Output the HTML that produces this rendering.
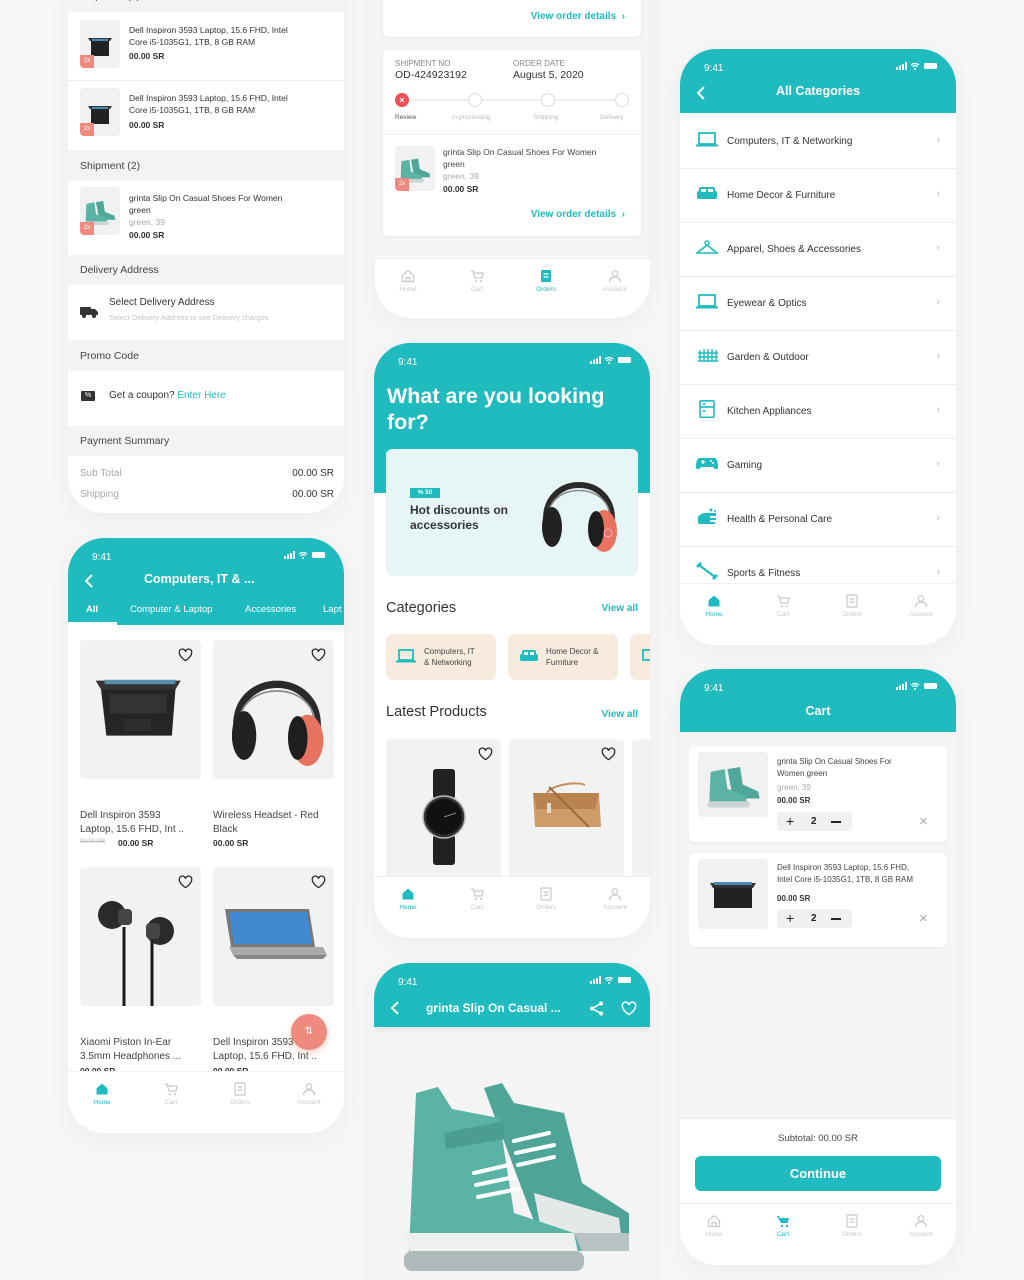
<!DOCTYPE html>
<html style="width:1024px;height:1280px;overflow:hidden"><head><meta charset="utf-8">
<style>
*{margin:0;padding:0;box-sizing:border-box}
body{width:1024px;height:1280px;background:#f6f6f6;font-family:"Liberation Sans",sans-serif;position:relative;overflow:hidden;color:#333}
.ph{position:absolute;background:#fff;border-radius:36px;overflow:hidden;box-shadow:0 6px 24px rgba(0,0,0,.04)}
.a{position:absolute}
.t{position:absolute;white-space:nowrap}
.teal{background:#1fbbbf}
.sb{position:absolute;top:14px;left:24px;color:#fff;font-size:10px}
.sbr{position:absolute;top:12px;right:16px}
.nav{position:absolute;left:0;right:0;bottom:0;height:62px;background:#fff;border-top:1px solid #f0f0f0}
.ni{position:absolute;top:10px;width:40px;margin-left:-20px;text-align:center;font-size:6.5px;color:#c8c8c8}
.ni svg{display:block;margin:0 auto 3px}
.on{color:#1fbbbf}
.thumb{position:absolute;background:#f1f1f1;border-radius:4px;overflow:hidden}
.badge{position:absolute;left:0;bottom:0;width:14px;height:13px;background:#ee8b7e;color:#fff;font-size:6px;line-height:13px;text-align:center}
.gh{position:absolute;left:12px;font-size:10.5px;color:#444}
.w{position:absolute;left:0;right:0;background:#fff}
.cat{position:absolute;left:0;right:0;height:54px;border-bottom:1px solid #ececec;background:#fff}
.cat .t{left:47px;top:21px;font-size:10px;color:#333}
.cat .ic{position:absolute;left:16px;top:17px}
.cat .ch{position:absolute;right:16px;top:19px;color:#bbb;font-size:11px}
.pc{position:absolute;background:#f2f2f2;border-radius:4px;overflow:hidden}
.heart{position:absolute;right:8px;top:8px}
</style></head><body>

<!-- ============ PHONE A (checkout) ============ -->
<div class="ph" style="left:68px;top:-40px;width:276px;height:553px;background:#f3f3f3">
 <div class="gh" style="top:30px">Shipment (1)</div>
 <div class="w" style="top:52px;height:138px"></div>
 <div class="a" style="left:0;right:0;top:120px;height:1px;background:#ececec"></div>
 <div class="thumb" style="left:12px;top:60px;width:40px;height:48px"><svg width="40" height="48" viewBox="0 0 40 48"><path d="M8 18h24l-2 3H10z" fill="#333"/><rect x="11" y="20" width="18" height="16" fill="#222"/><rect x="12" y="19" width="16" height="2" fill="#4a8bb5"/></svg><div class="badge">2x</div></div>
 <div class="t" style="left:61px;top:64px;font-size:8.5px;line-height:12px;color:#333">Dell Inspiron 3593 Laptop, 15.6 FHD, Intel<br>Core i5-1035G1, 1TB, 8 GB RAM</div>
 <div class="t" style="left:61px;top:91px;font-size:8.5px;font-weight:bold">00.00 SR</div>
 <div class="thumb" style="left:12px;top:128px;width:40px;height:48px"><svg width="40" height="48" viewBox="0 0 40 48"><path d="M8 18h24l-2 3H10z" fill="#333"/><rect x="11" y="20" width="18" height="16" fill="#222"/><rect x="12" y="19" width="16" height="2" fill="#4a8bb5"/></svg><div class="badge">2x</div></div>
 <div class="t" style="left:61px;top:132px;font-size:8.5px;line-height:12px;color:#333">Dell Inspiron 3593 Laptop, 15.6 FHD, Intel<br>Core i5-1035G1, 1TB, 8 GB RAM</div>
 <div class="t" style="left:61px;top:160px;font-size:8.5px;font-weight:bold">00.00 SR</div>
 <div class="gh" style="top:200px">Shipment (2)</div>
 <div class="w" style="top:221px;height:74px"></div>
 <div class="thumb" style="left:12px;top:227px;width:40px;height:48px"><svg width="40" height="48" viewBox="0 0 100 80"><path d="M40 18L58 15L62 42L86 52L88 62L48 62Z" fill="#4fa79a"/><path d="M16 22L36 18L40 48L66 58L68 70L14 70Z" fill="#5bb3a5"/><rect x="12" y="66" width="60" height="9" rx="4" fill="#cdd4d4"/></svg><div class="badge">2x</div></div>
 <div class="t" style="left:61px;top:232px;font-size:8.5px;line-height:12px;color:#333">grinta Slip On Casual Shoes For Women<br>green</div>
 <div class="t" style="left:61px;top:257px;font-size:8.5px;color:#aaa">green, 39</div>
 <div class="t" style="left:61px;top:270px;font-size:8.5px;font-weight:bold">00.00 SR</div>
 <div class="gh" style="top:304px">Delivery Address</div>
 <div class="w" style="top:325px;height:55px"></div>
 <svg class="a" style="left:12px;top:346px" width="18" height="12" viewBox="0 0 18 12"><rect x="0" y="1" width="11" height="8" rx="1" fill="#333"/><path d="M11 3h4l3 3v3h-7z" fill="#333"/><circle cx="4" cy="10" r="2" fill="#333"/><circle cx="14" cy="10" r="2" fill="#333"/></svg>
 <div class="t" style="left:41px;top:337px;font-size:10px;color:#333">Select Delivery Address</div>
 <div class="t" style="left:41px;top:353px;font-size:7.5px;color:#c4c4c4">Select Delivery Address to see Delivery charges</div>
 <div class="gh" style="top:390px">Promo Code</div>
 <div class="w" style="top:411px;height:55px"></div>
 <div class="a" style="left:13px;top:431px;width:14px;height:10px;background:#333;border-radius:1px;color:#fff;font-size:7px;text-align:center;line-height:10px">%</div>
 <div class="t" style="left:41px;top:430px;font-size:10px;color:#333">Get a coupon? <span style="color:#1fbbbf">Enter Here</span></div>
 <div class="gh" style="top:475px">Payment Summary</div>
 <div class="w" style="top:496px;height:60px"></div>
 <div class="t" style="left:12px;top:508px;font-size:10px;color:#aaa">Sub Total</div>
 <div class="t" style="right:10px;top:508px;font-size:10px;color:#333">00.00 SR</div>
 <div class="t" style="left:12px;top:529px;font-size:10px;color:#aaa">Shipping</div>
 <div class="t" style="right:10px;top:529px;font-size:10px;color:#333">00.00 SR</div>
</div>

<!-- ============ PHONE B (orders) ============ -->
<div class="ph" style="left:375px;top:-40px;width:275px;height:358px;background:#f5f5f5">
 <div class="a" style="left:8px;top:20px;width:258px;height:57px;background:#fff;border-radius:6px;box-shadow:0 1px 3px rgba(0,0,0,.06)"></div>
 <div class="t" style="right:25px;top:51px;font-size:10px;font-weight:bold;color:#1fbbbf">View order details &nbsp;›</div>
 <div class="a" style="left:8px;top:90px;width:258px;height:186px;background:#fff;border-radius:6px;box-shadow:0 1px 3px rgba(0,0,0,.06)"></div>
 <div class="t" style="left:20px;top:99px;font-size:8px;color:#888">SHIPMENT NO</div>
 <div class="t" style="left:20px;top:109px;font-size:10.5px;color:#333">OD-424923192</div>
 <div class="t" style="left:138px;top:99px;font-size:8px;color:#888">ORDER DATE</div>
 <div class="t" style="left:138px;top:109px;font-size:10.5px;color:#333">August 5, 2020</div>
 <div class="a" style="left:27px;top:139px;width:220px;height:2px;background:#eee"></div>
 <div class="a" style="left:20px;top:133px;width:14px;height:14px;border-radius:50%;background:#ef4f55;color:#fff;font-size:9px;line-height:14px;text-align:center;font-weight:bold">×</div>
 <div class="a" style="left:93px;top:133px;width:14px;height:14px;border-radius:50%;background:#fff;border:1.5px solid #ddd"></div>
 <div class="a" style="left:166px;top:133px;width:14px;height:14px;border-radius:50%;background:#fff;border:1.5px solid #ddd"></div>
 <div class="a" style="left:240px;top:133px;width:14px;height:14px;border-radius:50%;background:#fff;border:1.5px solid #ddd"></div>
 <div class="t" style="left:20px;top:154px;font-size:6.5px;color:#555">Review</div>
 <div class="t" style="left:77px;top:154px;font-size:6.5px;color:#bbb">in processing</div>
 <div class="t" style="left:158px;top:154px;font-size:6.5px;color:#bbb">Shipping</div>
 <div class="t" style="left:225px;top:154px;font-size:6.5px;color:#bbb">Delivery</div>
 <div class="a" style="left:8px;top:174px;width:258px;height:1px;background:#eee"></div>
 <div class="thumb" style="left:20px;top:186px;width:40px;height:45px"><svg width="40" height="45" viewBox="0 0 100 80"><path d="M40 18L58 15L62 42L86 52L88 62L48 62Z" fill="#4fa79a"/><path d="M16 22L36 18L40 48L66 58L68 70L14 70Z" fill="#5bb3a5"/><rect x="12" y="66" width="60" height="9" rx="4" fill="#cdd4d4"/></svg><div class="badge">2x</div></div>
 <div class="t" style="left:68px;top:186px;font-size:8.5px;line-height:12px;color:#444">grinta Slip On Casual Shoes For Women<br>green</div>
 <div class="t" style="left:68px;top:211px;font-size:8.5px;color:#aaa">green, 39</div>
 <div class="t" style="left:68px;top:224px;font-size:8.5px;font-weight:bold">00.00 SR</div>
 <div class="t" style="right:25px;top:249px;font-size:10px;font-weight:bold;color:#1fbbbf">View order details &nbsp;›</div>
 <div class="nav" style="height:60px">
  <div class="ni" style="left:33px"><svg width="14" height="14" viewBox="0 0 14 14"><path d="M1.5 6.5L7 1.5l5.5 5v6h-11z M5 12.5v-4h4v4" fill="none" stroke="#c8c8c8" stroke-width="1.2"/></svg>Home</div>
  <div class="ni" style="left:102px"><svg width="14" height="14" viewBox="0 0 14 14"><path d="M1 2h2l2 7h7l1-5H4" fill="none" stroke="#c8c8c8" stroke-width="1.2"/><circle cx="6" cy="12" r="1" fill="#c8c8c8"/><circle cx="11" cy="12" r="1" fill="#c8c8c8"/></svg>Cart</div>
  <div class="ni on" style="left:171px"><svg width="14" height="14" viewBox="0 0 14 14"><rect x="2" y="1" width="10" height="12" rx="1" fill="#1fbbbf"/><path d="M4.5 5h5M4.5 8h5" stroke="#fff" stroke-width="1.2"/></svg>Orders</div>
  <div class="ni" style="left:240px"><svg width="14" height="14" viewBox="0 0 14 14"><circle cx="7" cy="4.5" r="2.8" fill="none" stroke="#c8c8c8" stroke-width="1.2"/><path d="M1.5 13c0-3 2.5-5 5.5-5s5.5 2 5.5 5" fill="none" stroke="#c8c8c8" stroke-width="1.2"/></svg>Account</div>
 </div>
</div>

<!-- ============ PHONE C (home) ============ -->
<div class="ph" style="left:374px;top:343px;width:276px;height:595px">
 <div class="a teal" style="left:0;top:0;width:276px;height:150px"></div>
 <div class="sb">9:41</div>
 <svg class="sbr" width="44" height="10" viewBox="0 0 44 10"><rect x="0" y="6" width="2" height="3" fill="#fff"/><rect x="3" y="4.5" width="2" height="4.5" fill="#fff"/><rect x="6" y="3" width="2" height="6" fill="#fff"/><rect x="9" y="1" width="2" height="8" fill="#fff"/><path d="M15 4a6 6 0 0 1 8 0M16.5 5.8a3.5 3.5 0 0 1 5 0" stroke="#fff" stroke-width="1.2" fill="none"/><circle cx="19" cy="8" r="1" fill="#fff"/><rect x="28" y="2" width="13" height="6" rx="1.5" fill="#fff"/></svg>
 <div class="t" style="left:13px;top:40px;font-size:21.5px;line-height:26px;font-weight:bold;color:#fff;white-space:normal;width:250px">What are you looking for?</div>
 <div class="a" style="left:12px;top:106px;width:252px;height:127px;background:#e6f6f6;border-radius:6px"></div>
 <div class="a" style="left:36px;top:145px;width:30px;height:10px;background:#1fbbbf;color:#fff;font-size:6.5px;text-align:center;line-height:10px;font-weight:bold">% 50</div>
 <div class="t" style="left:36px;top:160px;font-size:12px;line-height:15px;font-weight:bold;color:#333">Hot discounts on<br>accessories</div>
 <svg class="a" style="left:164px;top:118px" width="82" height="100" viewBox="0 0 82 100"><path d="M8 60C6 12 76 12 74 60" fill="none" stroke="#2a2a2a" stroke-width="6"/><path d="M10 58C9 20 73 20 72 58" fill="none" stroke="#888" stroke-width="1.5"/><ellipse cx="14" cy="66" rx="10" ry="20" fill="#222"/><ellipse cx="66" cy="70" rx="13" ry="21" fill="#e8735f"/><ellipse cx="58" cy="68" rx="8" ry="18" fill="#1e1e1e"/><circle cx="70" cy="72" r="4" fill="none" stroke="#fbd" stroke-width="0.8"/></svg>
 <div class="t" style="left:12px;top:257px;font-size:14.5px;color:#333">Categories</div>
 <div class="t" style="right:12px;top:260px;font-size:10px;font-weight:bold;color:#1fbbbf">View all</div>
 <div class="a" style="left:12px;top:291px;width:110px;height:46px;background:#f7ebde;border-radius:7px"></div>
 <svg class="a" style="left:22px;top:306px" width="20" height="14" viewBox="0 0 20 14"><rect x="3" y="1" width="14" height="10" fill="none" stroke="#1fbbbf" stroke-width="1.8"/><rect x="0" y="11.5" width="20" height="2" fill="#1fbbbf"/></svg>
 <div class="t" style="left:50px;top:303px;font-size:8px;line-height:11px;color:#444">Computers, IT<br>&amp; Networking</div>
 <div class="a" style="left:134px;top:291px;width:110px;height:46px;background:#f7ebde;border-radius:7px"></div>
 <svg class="a" style="left:145px;top:306px" width="20" height="14" viewBox="0 0 20 14"><rect x="1" y="5" width="18" height="7" rx="2" fill="#1fbbbf"/><rect x="3" y="1" width="14" height="6" rx="2" fill="#1fbbbf"/><rect x="5" y="3" width="4" height="3" fill="#fff"/><rect x="11" y="3" width="4" height="3" fill="#fff"/></svg>
 <div class="t" style="left:172px;top:303px;font-size:8px;line-height:11px;color:#444">Home Decor &amp;<br>Furniture</div>
 <div class="a" style="left:256px;top:291px;width:40px;height:46px;background:#f7ebde;border-radius:7px"></div>
 <svg class="a" style="left:266px;top:306px" width="20" height="14" viewBox="0 0 20 14"><rect x="3" y="1" width="14" height="10" fill="none" stroke="#1fbbbf" stroke-width="1.8"/></svg>
 <div class="t" style="left:12px;top:361px;font-size:14.5px;color:#333">Latest Products</div>
 <div class="t" style="right:12px;top:366px;font-size:10px;font-weight:bold;color:#1fbbbf">View all</div>
 <div class="pc" style="left:12px;top:396px;width:115px;height:140px">
  <svg class="heart" width="15" height="14" viewBox="0 0 24 22"><path d="M12 20S2 14 2 7a5 5 0 0 1 10-1 5 5 0 0 1 10 1c0 7-10 13-10 13z" fill="none" stroke="#222" stroke-width="2"/></svg>
  <svg class="a" style="left:35px;top:30px" width="46" height="96" viewBox="0 0 46 96"><rect x="12" y="0" width="22" height="30" rx="3" fill="#222"/><rect x="12" y="66" width="22" height="30" rx="3" fill="#222"/><circle cx="23" cy="48" r="21" fill="#333" stroke="#bbb" stroke-width="1.5"/><circle cx="23" cy="48" r="18" fill="#111"/><path d="M23 48L35 44" stroke="#888" stroke-width="1"/></svg>
 </div>
 <div class="pc" style="left:135px;top:396px;width:115px;height:140px">
  <svg class="heart" width="15" height="14" viewBox="0 0 24 22"><path d="M12 20S2 14 2 7a5 5 0 0 1 10-1 5 5 0 0 1 10 1c0 7-10 13-10 13z" fill="none" stroke="#222" stroke-width="2"/></svg>
  <svg class="a" style="left:18px;top:36px" width="80" height="60" viewBox="0 0 80 60"><path d="M20 18c4-8 30-12 38-8" fill="none" stroke="#c58f58" stroke-width="2"/><path d="M6 18h66l2 34H8z" fill="#cf9b68"/><path d="M6 18h66l-4 16H10z" fill="#b9834f"/><path d="M22 12l40 40" stroke="#a06c3e" stroke-width="2"/><rect x="20" y="28" width="4" height="10" fill="#ddd"/></svg>
 </div>
 <div class="pc" style="left:258px;top:396px;width:40px;height:140px"></div>
 <div class="nav">
  <div class="ni on" style="left:34px"><svg width="14" height="14" viewBox="0 0 14 14"><path d="M1.5 6.5L7 1.5l5.5 5v6h-11z" fill="#1fbbbf"/></svg>Home</div>
  <div class="ni" style="left:103px"><svg width="14" height="14" viewBox="0 0 14 14"><path d="M1 2h2l2 7h7l1-5H4" fill="none" stroke="#c8c8c8" stroke-width="1.2"/><circle cx="6" cy="12" r="1" fill="#c8c8c8"/><circle cx="11" cy="12" r="1" fill="#c8c8c8"/></svg>Cart</div>
  <div class="ni" style="left:172px"><svg width="14" height="14" viewBox="0 0 14 14"><rect x="2" y="1" width="10" height="12" rx="1" fill="none" stroke="#c8c8c8" stroke-width="1.2"/><path d="M4.5 5h5M4.5 8h5" stroke="#c8c8c8" stroke-width="1.2"/></svg>Orders</div>
  <div class="ni" style="left:241px"><svg width="14" height="14" viewBox="0 0 14 14"><circle cx="7" cy="4.5" r="2.8" fill="none" stroke="#c8c8c8" stroke-width="1.2"/><path d="M1.5 13c0-3 2.5-5 5.5-5s5.5 2 5.5 5" fill="none" stroke="#c8c8c8" stroke-width="1.2"/></svg>Account</div>
 </div>
</div>

<!-- ============ PHONE D (product detail) ============ -->
<div class="ph" style="left:374px;top:963px;width:276px;height:317px;border-radius:36px 36px 0 0;background:#f4f4f4">
 <div class="a teal" style="left:0;top:0;width:276px;height:64px;box-shadow:0 2px 6px rgba(0,0,0,.08)"></div>
 <div class="sb">9:41</div>
 <svg class="sbr" width="44" height="10" viewBox="0 0 44 10"><rect x="0" y="6" width="2" height="3" fill="#fff"/><rect x="3" y="4.5" width="2" height="4.5" fill="#fff"/><rect x="6" y="3" width="2" height="6" fill="#fff"/><rect x="9" y="1" width="2" height="8" fill="#fff"/><path d="M15 4a6 6 0 0 1 8 0M16.5 5.8a3.5 3.5 0 0 1 5 0" stroke="#fff" stroke-width="1.2" fill="none"/><circle cx="19" cy="8" r="1" fill="#fff"/><rect x="28" y="2" width="13" height="6" rx="1.5" fill="#fff"/></svg>
 <svg class="a" style="left:17px;top:38px" width="8" height="14" viewBox="0 0 8 14"><path d="M7 1L1 7l6 6" fill="none" stroke="#fff" stroke-width="2"/></svg>
 <div class="t" style="left:52px;top:38px;font-size:12px;font-weight:bold;color:#fff">grinta Slip On Casual ...</div>
 <svg class="a" style="left:215px;top:38px" width="15" height="15" viewBox="0 0 15 15"><circle cx="12" cy="2.5" r="2" fill="#fff"/><circle cx="3" cy="7.5" r="2" fill="#fff"/><circle cx="12" cy="12.5" r="2" fill="#fff"/><path d="M12 2.5L3 7.5l9 5" stroke="#fff" stroke-width="1.5" fill="none"/></svg>
 <svg class="a" style="left:247px;top:38px" width="16" height="15" viewBox="0 0 24 22"><path d="M12 20S2 14 2 7a5 5 0 0 1 10-1 5 5 0 0 1 10 1c0 7-10 13-10 13z" fill="none" stroke="#fff" stroke-width="2.2"/></svg>
 <svg class="a" style="left:30px;top:110px" width="225" height="200" viewBox="0 0 225 200"><path d="M80 15L98 10L110 30L160 40L178 110L240 150L240 175L140 175Z" fill="#4ea597"/><path d="M130 120L215 145L218 170L140 172Z" fill="#e4e8e8"/><rect x="120" y="160" width="110" height="18" rx="8" fill="#b8c2c2"/><path d="M12 20L34 14L48 36L95 45L110 140L170 160L178 178L5 178Z" fill="#5bb3a5"/><path d="M0 160L170 160L175 185L10 190Z" fill="#eef0f0"/><rect x="0" y="178" width="180" height="20" rx="8" fill="#aeb9b9"/><path d="M70 100l35-8M72 112l38-8M74 124l40-8M110 68l35-8M112 80l38-8M114 92l36-8" stroke="#fff" stroke-width="4" stroke-linecap="round"/><path d="M40 60l60-12v18l-58 10z" fill="#4a9e91"/></svg>
</div>

<!-- ============ PHONE E (categories) ============ -->
<div class="ph" style="left:680px;top:49px;width:276px;height:596px">
 <div class="a teal" style="left:0;top:0;width:276px;height:64px"></div>
 <div class="sb">9:41</div>
 <svg class="sbr" width="44" height="10" viewBox="0 0 44 10"><rect x="0" y="6" width="2" height="3" fill="#fff"/><rect x="3" y="4.5" width="2" height="4.5" fill="#fff"/><rect x="6" y="3" width="2" height="6" fill="#fff"/><rect x="9" y="1" width="2" height="8" fill="#fff"/><path d="M15 4a6 6 0 0 1 8 0M16.5 5.8a3.5 3.5 0 0 1 5 0" stroke="#fff" stroke-width="1.2" fill="none"/><circle cx="19" cy="8" r="1" fill="#fff"/><rect x="28" y="2" width="13" height="6" rx="1.5" fill="#fff"/></svg>
 <svg class="a" style="left:17px;top:37px" width="8" height="14" viewBox="0 0 8 14"><path d="M7 1L1 7l6 6" fill="none" stroke="#fff" stroke-width="2"/></svg>
 <div class="t" style="left:0;width:276px;text-align:center;top:35px;font-size:12.5px;font-weight:bold;color:#fff">All Categories</div>
 <div class="cat" style="top:66px"><svg class="ic" width="22" height="15" viewBox="0 0 22 15"><rect x="3" y="1" width="16" height="11" fill="none" stroke="#1fbbbf" stroke-width="1.8"/><rect x="0" y="12.5" width="22" height="2" fill="#1fbbbf"/></svg><div class="t">Computers, IT &amp; Networking</div><div class="ch">›</div></div>
 <div class="cat" style="top:120px"><svg class="ic" width="22" height="15" viewBox="0 0 22 15"><rect x="1" y="5" width="20" height="8" rx="2" fill="#1fbbbf"/><rect x="3" y="1" width="16" height="7" rx="2" fill="#1fbbbf"/><rect x="5" y="3" width="5" height="3" fill="#fff"/><rect x="12" y="3" width="5" height="3" fill="#fff"/></svg><div class="t">Home Decor &amp; Furniture</div><div class="ch">›</div></div>
 <div class="cat" style="top:174px"><svg class="ic" width="22" height="15" viewBox="0 0 22 15"><circle cx="11" cy="3" r="2" fill="none" stroke="#1fbbbf" stroke-width="1.5"/><path d="M11 5L1 13h20z" fill="none" stroke="#1fbbbf" stroke-width="1.6"/></svg><div class="t">Apparel, Shoes &amp; Accessories</div><div class="ch">›</div></div>
 <div class="cat" style="top:228px"><svg class="ic" width="22" height="15" viewBox="0 0 22 15"><rect x="3" y="1" width="16" height="11" fill="none" stroke="#1fbbbf" stroke-width="1.8"/><rect x="0" y="12.5" width="22" height="2" fill="#1fbbbf"/></svg><div class="t">Eyewear &amp; Optics</div><div class="ch">›</div></div>
 <div class="cat" style="top:282px"><svg class="ic" width="22" height="15" viewBox="0 0 22 15"><path d="M4 2v12M8 1v13M12 1v13M16 1v13M20 2v12M2 5h20M2 9h20M2 13h20" stroke="#1fbbbf" stroke-width="1.4"/></svg><div class="t">Garden &amp; Outdoor</div><div class="ch">›</div></div>
 <div class="cat" style="top:336px"><svg class="ic" width="22" height="18" viewBox="0 0 22 18" style="top:15px"><rect x="4" y="0.8" width="14" height="16.5" rx="1" fill="none" stroke="#1fbbbf" stroke-width="1.6"/><path d="M4 7h14" stroke="#1fbbbf" stroke-width="1.6"/><rect x="7" y="3" width="2" height="2" fill="#1fbbbf"/><rect x="7" y="10" width="2" height="2" fill="#1fbbbf"/></svg><div class="t">Kitchen Appliances</div><div class="ch">›</div></div>
 <div class="cat" style="top:390px"><svg class="ic" width="22" height="15" viewBox="0 0 22 15"><path d="M4 2h14c3 0 4 4 4 9 0 3-3 3-5 0H5c-2 3-5 3-5 0 0-5 1-9 4-9z" fill="#1fbbbf"/><path d="M5 6h4M7 4v4" stroke="#fff" stroke-width="1.3"/><circle cx="15" cy="5" r="1" fill="#fff"/><circle cx="17" cy="7" r="1" fill="#fff"/></svg><div class="t">Gaming</div><div class="ch">›</div></div>
 <div class="cat" style="top:444px"><svg class="ic" width="22" height="18" viewBox="0 0 22 18" style="top:15px"><path d="M2 9c2-3 5-4 8-4h10v3h-6v2h6v2h-6v2h5v2H4c-2 0-2-2-2-2z" fill="#1fbbbf"/><circle cx="15" cy="2" r="1.5" fill="#1fbbbf"/><circle cx="19" cy="3" r="1" fill="#1fbbbf"/></svg><div class="t">Health &amp; Personal Care</div><div class="ch">›</div></div>
 <div class="cat" style="top:498px"><svg class="ic" width="22" height="18" viewBox="0 0 22 18" style="top:15px"><path d="M3 3l16 12" stroke="#1fbbbf" stroke-width="2.2"/><path d="M1 5l4-4M17 17l4-4" stroke="#1fbbbf" stroke-width="2.8"/></svg><div class="t">Sports &amp; Fitness</div><div class="ch">›</div></div>
 <div class="nav">
  <div class="ni on" style="left:34px"><svg width="14" height="14" viewBox="0 0 14 14"><path d="M1.5 6.5L7 1.5l5.5 5v6h-11z" fill="#1fbbbf"/></svg>Home</div>
  <div class="ni" style="left:103px"><svg width="14" height="14" viewBox="0 0 14 14"><path d="M1 2h2l2 7h7l1-5H4" fill="none" stroke="#c8c8c8" stroke-width="1.2"/><circle cx="6" cy="12" r="1" fill="#c8c8c8"/><circle cx="11" cy="12" r="1" fill="#c8c8c8"/></svg>Cart</div>
  <div class="ni" style="left:172px"><svg width="14" height="14" viewBox="0 0 14 14"><rect x="2" y="1" width="10" height="12" rx="1" fill="none" stroke="#c8c8c8" stroke-width="1.2"/><path d="M4.5 5h5M4.5 8h5" stroke="#c8c8c8" stroke-width="1.2"/></svg>Orders</div>
  <div class="ni" style="left:241px"><svg width="14" height="14" viewBox="0 0 14 14"><circle cx="7" cy="4.5" r="2.8" fill="none" stroke="#c8c8c8" stroke-width="1.2"/><path d="M1.5 13c0-3 2.5-5 5.5-5s5.5 2 5.5 5" fill="none" stroke="#c8c8c8" stroke-width="1.2"/></svg>Account</div>
 </div>
</div>

<!-- ============ PHONE F (product list) ============ -->
<div class="ph" style="left:68px;top:538px;width:276px;height:595px">
 <div class="a teal" style="left:0;top:0;width:276px;height:87px"></div>
 <div class="sb">9:41</div>
 <svg class="sbr" width="44" height="10" viewBox="0 0 44 10"><rect x="0" y="6" width="2" height="3" fill="#fff"/><rect x="3" y="4.5" width="2" height="4.5" fill="#fff"/><rect x="6" y="3" width="2" height="6" fill="#fff"/><rect x="9" y="1" width="2" height="8" fill="#fff"/><path d="M15 4a6 6 0 0 1 8 0M16.5 5.8a3.5 3.5 0 0 1 5 0" stroke="#fff" stroke-width="1.2" fill="none"/><circle cx="19" cy="8" r="1" fill="#fff"/><rect x="28" y="2" width="13" height="6" rx="1.5" fill="#fff"/></svg>
 <svg class="a" style="left:17px;top:36px" width="8" height="14" viewBox="0 0 8 14"><path d="M7 1L1 7l6 6" fill="none" stroke="#fff" stroke-width="2"/></svg>
 <div class="t" style="left:76px;top:34px;font-size:12.5px;font-weight:bold;color:#fff">Computers, IT &amp; ...</div>
 <div class="t" style="left:18px;top:66px;font-size:9.5px;font-weight:bold;color:#fff">All</div>
 <div class="t" style="left:62px;top:66px;font-size:9.5px;color:#fff">Computer &amp; Laptop</div>
 <div class="t" style="left:177px;top:66px;font-size:9.5px;color:#fff">Accessories</div>
 <div class="t" style="left:255px;top:66px;font-size:9.5px;color:#fff">Lapt</div>
 <div class="a" style="left:0;top:84px;width:49px;height:3px;background:#fff"></div>
 <div class="pc" style="left:12px;top:102px;width:121px;height:139px">
  <svg class="heart" width="15" height="14" viewBox="0 0 24 22"><path d="M12 20S2 14 2 7a5 5 0 0 1 10-1 5 5 0 0 1 10 1c0 7-10 13-10 13z" fill="none" stroke="#222" stroke-width="2"/></svg>
  <svg class="a" style="left:12px;top:38px" width="96" height="62" viewBox="0 0 100 70"><path d="M0 3h96l-6 10H6z" fill="#333"/><rect x="10" y="2" width="80" height="5" fill="#5a8fb0"/><path d="M6 13h84l-4 52H12z" fill="#252525"/><rect x="16" y="18" width="64" height="22" fill="#333"/><rect x="32" y="46" width="30" height="14" fill="#2e2e2e"/></svg>
 </div>
 <div class="pc" style="left:145px;top:102px;width:121px;height:139px">
  <svg class="heart" width="15" height="14" viewBox="0 0 24 22"><path d="M12 20S2 14 2 7a5 5 0 0 1 10-1 5 5 0 0 1 10 1c0 7-10 13-10 13z" fill="none" stroke="#222" stroke-width="2"/></svg>
  <svg class="a" style="left:14px;top:14px" width="100" height="124" viewBox="0 0 82 100"><path d="M8 60C6 12 76 12 74 60" fill="none" stroke="#2a2a2a" stroke-width="6"/><path d="M10 58C9 20 73 20 72 58" fill="none" stroke="#888" stroke-width="1.5"/><ellipse cx="14" cy="66" rx="10" ry="20" fill="#222"/><ellipse cx="66" cy="70" rx="13" ry="21" fill="#e8735f"/><ellipse cx="58" cy="68" rx="8" ry="18" fill="#1e1e1e"/></svg>
 </div>
 <div class="t" style="left:12px;top:271px;font-size:10px;line-height:14px;color:#444">Dell Inspiron 3593<br>Laptop, 15.6 FHD, Int ..</div>
 <div class="t" style="left:12px;top:301px;font-size:6px;color:#bbb;text-decoration:line-through">00.00 SR</div>
 <div class="t" style="left:50px;top:300px;font-size:8.5px;font-weight:bold">00.00 SR</div>
 <div class="t" style="left:145px;top:271px;font-size:10px;line-height:14px;color:#444">Wireless Headset - Red<br>Black</div>
 <div class="t" style="left:145px;top:300px;font-size:8.5px;font-weight:bold">00.00 SR</div>
 <div class="pc" style="left:12px;top:329px;width:121px;height:139px">
  <svg class="heart" width="15" height="14" viewBox="0 0 24 22"><path d="M12 20S2 14 2 7a5 5 0 0 1 10-1 5 5 0 0 1 10 1c0 7-10 13-10 13z" fill="none" stroke="#222" stroke-width="2"/></svg>
  <svg class="a" style="left:8px;top:30px" width="105" height="109" viewBox="0 0 105 109"><circle cx="24" cy="18" r="14" fill="#2a2a2a"/><rect x="30" y="12" width="14" height="16" rx="4" fill="#444"/><circle cx="72" cy="34" r="14" fill="#2a2a2a"/><rect x="58" y="26" width="14" height="16" rx="4" fill="#444"/><path d="M36 30v79M64 44v65" stroke="#1a1a1a" stroke-width="3"/></svg>
 </div>
 <div class="pc" style="left:145px;top:329px;width:121px;height:139px">
  <svg class="heart" width="15" height="14" viewBox="0 0 24 22"><path d="M12 20S2 14 2 7a5 5 0 0 1 10-1 5 5 0 0 1 10 1c0 7-10 13-10 13z" fill="none" stroke="#222" stroke-width="2"/></svg>
  <svg class="a" style="left:6px;top:40px" width="110" height="60" viewBox="0 0 110 60"><path d="M6 2h84l6 38H12z" fill="#777"/><path d="M10 5h78l5 32H15z" fill="#3f8ad0"/><path d="M10 40h94l4 8H14z" fill="#aaa"/><path d="M14 48h94l-4 4H18z" fill="#888"/></svg>
 </div>
 <div class="t" style="left:12px;top:498px;font-size:10px;line-height:14px;color:#444">Xiaomi Piston In-Ear<br>3.5mm Headphones ...</div>
 <div class="t" style="left:12px;top:528px;font-size:8.5px;font-weight:bold">00.00 SR</div>
 <div class="t" style="left:145px;top:498px;font-size:10px;line-height:14px;color:#444">Dell Inspiron 3593<br>Laptop, 15.6 FHD, Int ..</div>
 <div class="t" style="left:145px;top:528px;font-size:8.5px;font-weight:bold">00.00 SR</div>
 <div class="a" style="left:223px;top:476px;width:36px;height:36px;border-radius:50%;background:#ee8b7e;box-shadow:0 3px 8px rgba(238,139,126,.4);color:#fff;font-size:10px;text-align:center;line-height:36px">⇅</div>
 <div class="nav">
  <div class="ni on" style="left:34px"><svg width="14" height="14" viewBox="0 0 14 14"><path d="M1.5 6.5L7 1.5l5.5 5v6h-11z" fill="#1fbbbf"/></svg>Home</div>
  <div class="ni" style="left:103px"><svg width="14" height="14" viewBox="0 0 14 14"><path d="M1 2h2l2 7h7l1-5H4" fill="none" stroke="#c8c8c8" stroke-width="1.2"/><circle cx="6" cy="12" r="1" fill="#c8c8c8"/><circle cx="11" cy="12" r="1" fill="#c8c8c8"/></svg>Cart</div>
  <div class="ni" style="left:172px"><svg width="14" height="14" viewBox="0 0 14 14"><rect x="2" y="1" width="10" height="12" rx="1" fill="none" stroke="#c8c8c8" stroke-width="1.2"/><path d="M4.5 5h5M4.5 8h5" stroke="#c8c8c8" stroke-width="1.2"/></svg>Orders</div>
  <div class="ni" style="left:241px"><svg width="14" height="14" viewBox="0 0 14 14"><circle cx="7" cy="4.5" r="2.8" fill="none" stroke="#c8c8c8" stroke-width="1.2"/><path d="M1.5 13c0-3 2.5-5 5.5-5s5.5 2 5.5 5" fill="none" stroke="#c8c8c8" stroke-width="1.2"/></svg>Account</div>
 </div>
</div>

<!-- ============ PHONE G (cart) ============ -->
<div class="ph" style="left:680px;top:669px;width:276px;height:596px;background:#f5f5f5">
 <div class="a teal" style="left:0;top:0;width:276px;height:63px"></div>
 <div class="sb">9:41</div>
 <svg class="sbr" width="44" height="10" viewBox="0 0 44 10"><rect x="0" y="6" width="2" height="3" fill="#fff"/><rect x="3" y="4.5" width="2" height="4.5" fill="#fff"/><rect x="6" y="3" width="2" height="6" fill="#fff"/><rect x="9" y="1" width="2" height="8" fill="#fff"/><path d="M15 4a6 6 0 0 1 8 0M16.5 5.8a3.5 3.5 0 0 1 5 0" stroke="#fff" stroke-width="1.2" fill="none"/><circle cx="19" cy="8" r="1" fill="#fff"/><rect x="28" y="2" width="13" height="6" rx="1.5" fill="#fff"/></svg>
 <div class="t" style="left:0;width:276px;text-align:center;top:35px;font-size:12.5px;font-weight:bold;color:#fff">Cart</div>
 <div class="a" style="left:9px;top:77px;width:258px;height:96px;background:#fff;border-radius:6px;box-shadow:0 1px 3px rgba(0,0,0,.05)"></div>
 <div class="thumb" style="left:18px;top:83px;width:70px;height:65px"><svg width="70" height="65" viewBox="0 0 100 80"><path d="M42 18L60 15L64 40L86 50L88 60L50 60Z" fill="#4fa79a"/><path d="M18 22L38 18L42 46L68 56L70 68L16 68Z" fill="#5bb3a5"/><rect x="14" y="64" width="60" height="9" rx="4" fill="#cdd4d4"/></svg></div>
 <div class="t" style="left:97px;top:87px;font-size:8px;line-height:12px;color:#444">grinta Slip On Casual Shoes For<br>Women green</div>
 <div class="t" style="left:97px;top:114px;font-size:8px;color:#aaa">green, 39</div>
 <div class="t" style="left:97px;top:127px;font-size:8px;font-weight:bold">00.00 SR</div>
 <div class="a" style="left:97px;top:143px;width:75px;height:19px;background:#f0f0f0;border-radius:4px"></div>
 <div class="t" style="left:106px;top:144px;font-size:14px;color:#222">+</div>
 <div class="t" style="left:131px;top:147px;font-size:10px;font-weight:bold;color:#222">2</div>
 <div class="a" style="left:151px;top:152px;width:10px;height:1.6px;background:#222"></div>
 <div class="t" style="left:239px;top:144px;font-size:15px;color:#aaa">×</div>
 <div class="a" style="left:9px;top:184px;width:258px;height:94px;background:#fff;border-radius:6px;box-shadow:0 1px 3px rgba(0,0,0,.05)"></div>
 <div class="thumb" style="left:18px;top:190px;width:70px;height:70px"><svg width="70" height="70" viewBox="0 0 70 70"><path d="M12 24h46l-3 5H15z" fill="#333"/><rect x="16" y="23" width="38" height="3" fill="#4a8bb5"/><rect x="16" y="29" width="38" height="20" fill="#222"/></svg></div>
 <div class="t" style="left:97px;top:193px;font-size:8px;line-height:12px;color:#444">Dell Inspiron 3593 Laptop, 15.6 FHD,<br>Intel Core i5-1035G1, 1TB, 8 GB RAM</div>
 <div class="t" style="left:97px;top:225px;font-size:8px;font-weight:bold">00.00 SR</div>
 <div class="a" style="left:97px;top:240px;width:75px;height:19px;background:#f0f0f0;border-radius:4px"></div>
 <div class="t" style="left:106px;top:241px;font-size:14px;color:#222">+</div>
 <div class="t" style="left:131px;top:244px;font-size:10px;font-weight:bold;color:#222">2</div>
 <div class="a" style="left:151px;top:249px;width:10px;height:1.6px;background:#222"></div>
 <div class="t" style="left:239px;top:241px;font-size:15px;color:#aaa">×</div>
 <div class="a" style="left:0;top:449px;width:276px;height:90px;background:#fff;border-top:1px solid #eee"></div>
 <div class="t" style="left:0;width:276px;text-align:center;top:464px;font-size:9.5px;color:#444">Subtotal: 00.00 SR</div>
 <div class="a" style="left:15px;top:487px;width:246px;height:35px;background:#1fbbbf;border-radius:6px;color:#fff;font-size:13px;font-weight:bold;text-align:center;line-height:35px">Continue</div>
 <div class="nav">
  <div class="ni" style="left:34px"><svg width="14" height="14" viewBox="0 0 14 14"><path d="M1.5 6.5L7 1.5l5.5 5v6h-11z M5 12.5v-4h4v4" fill="none" stroke="#c8c8c8" stroke-width="1.2"/></svg>Home</div>
  <div class="ni on" style="left:103px"><svg width="14" height="14" viewBox="0 0 14 14"><path d="M1 2h2l0.5 2H13l-1.5 5H5z" fill="#1fbbbf"/><circle cx="6" cy="12" r="1.2" fill="#1fbbbf"/><circle cx="11" cy="12" r="1.2" fill="#1fbbbf"/></svg>Cart</div>
  <div class="ni" style="left:172px"><svg width="14" height="14" viewBox="0 0 14 14"><rect x="2" y="1" width="10" height="12" rx="1" fill="none" stroke="#c8c8c8" stroke-width="1.2"/><path d="M4.5 5h5M4.5 8h5" stroke="#c8c8c8" stroke-width="1.2"/></svg>Orders</div>
  <div class="ni" style="left:241px"><svg width="14" height="14" viewBox="0 0 14 14"><circle cx="7" cy="4.5" r="2.8" fill="none" stroke="#c8c8c8" stroke-width="1.2"/><path d="M1.5 13c0-3 2.5-5 5.5-5s5.5 2 5.5 5" fill="none" stroke="#c8c8c8" stroke-width="1.2"/></svg>Account</div>
 </div>
</div>

</body></html>
